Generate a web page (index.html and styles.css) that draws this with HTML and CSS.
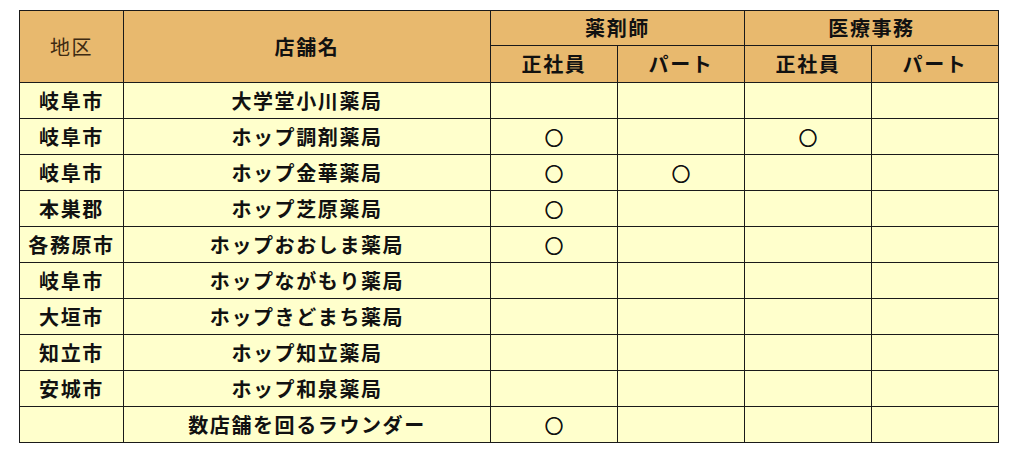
FILE: index.html
```html
<!DOCTYPE html>
<html lang="ja">
<head>
<meta charset="utf-8">
<link rel="stylesheet" href="styles.css">
</head>
<body>
<div class="wrap">
<table class="recruit">
  <colgroup>
    <col class="c-area"><col class="c-name"><col class="c-x"><col class="c-x"><col class="c-x"><col class="c-x">
  </colgroup>
  <thead>
    <tr class="h1">
      <th rowspan="2" class="area-head">地区</th>
      <th rowspan="2">店舗名</th>
      <th colspan="2">薬剤師</th>
      <th colspan="2">医療事務</th>
    </tr>
    <tr class="h2">
      <th>正社員</th><th>パート</th><th>正社員</th><th>パート</th>
    </tr>
  </thead>
  <tbody>
    <tr><td>岐阜市</td><td>大学堂小川薬局</td><td></td><td></td><td></td><td></td></tr>
    <tr><td>岐阜市</td><td>ホップ調剤薬局</td><td class="mk">○</td><td></td><td class="mk">○</td><td></td></tr>
    <tr><td>岐阜市</td><td>ホップ金華薬局</td><td class="mk">○</td><td class="mk">○</td><td></td><td></td></tr>
    <tr><td>本巣郡</td><td>ホップ芝原薬局</td><td class="mk">○</td><td></td><td></td><td></td></tr>
    <tr><td>各務原市</td><td>ホップおおしま薬局</td><td class="mk">○</td><td></td><td></td><td></td></tr>
    <tr><td>岐阜市</td><td>ホップながもり薬局</td><td></td><td></td><td></td><td></td></tr>
    <tr><td>大垣市</td><td>ホップきどまち薬局</td><td></td><td></td><td></td><td></td></tr>
    <tr><td>知立市</td><td>ホップ知立薬局</td><td></td><td></td><td></td><td></td></tr>
    <tr><td>安城市</td><td>ホップ和泉薬局</td><td></td><td></td><td></td><td></td></tr>
    <tr><td></td><td>数店舗を回るラウンダー</td><td class="mk">○</td><td></td><td></td><td></td></tr>
  </tbody>
</table>
</div>
</body>
</html>
```
FILE: styles.css
```css
html, body {
  margin: 0;
  padding: 0;
  background: #ffffff;
}
.wrap {
  padding: 10px 0 0 19px;
}
.recruit {
  border-collapse: collapse;
  table-layout: fixed;
  width: 980px;
  font-family: "Noto Sans CJK JP", "Noto Sans", sans-serif;
  font-size: 20px;
  color: #111;
}
.c-area { width: 104px; }
.c-name { width: 367px; }
.c-x { width: 127px; }
.recruit th, .recruit td {
  border: 1px solid #1a1a1a;
  padding: 0;
  text-align: center;
  vertical-align: middle;
  font-weight: 700;
  letter-spacing: 1.6px;
  line-height: 1;
}
.recruit th {
  background: #e8b96e;
}
.h1 th { height: 34px; }
.h2 th { height: 36px; }
.recruit td {
  background: #ffffcc;
  height: 35px;
}
.recruit th.area-head {
  font-weight: 400;
  color: #3d2a12;
}
.recruit td.mk {
  font-weight: 400;
  font-size: 18px;
  letter-spacing: 0;
  -webkit-text-stroke: 0.9px #111;
}
```
